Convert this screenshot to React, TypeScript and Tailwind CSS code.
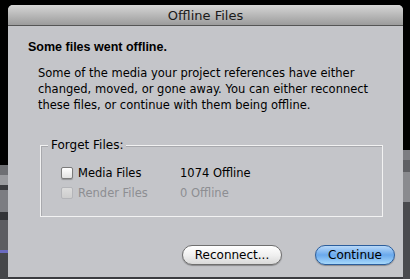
import React from "react";

const font = { fontFamily: '"DejaVu Sans", "Liberation Sans", sans-serif' };

function Checkbox({ disabled }: { disabled?: boolean }) {
  return (
    <span
      className={
        "inline-block w-[12px] h-[12px] rounded-[2px] border " +
        (disabled
          ? "border-[#b4b5b9] bg-gradient-to-b from-[#dcdcdc] to-[#cdcdcd]"
          : "border-[#7b7b7b] bg-gradient-to-b from-[#ffffff] to-[#e2e2e2] shadow-[0_1px_1px_rgba(0,0,0,0.25)]")
      }
    />
  );
}

export default function App() {
  return (
    <div className="w-[410px] h-[279px] bg-black flex overflow-hidden" style={font}>
      {/* background app peeking on the left */}
      <div className="w-[8px] flex flex-col">
        <div className="h-[165px] bg-black" />
        <div className="h-[10px] bg-[#6e6f73]" />
        <div className="h-[10px] bg-[#9a9b9f]" />
        <div className="h-[5px] bg-[#3a3b3f]" />
        <div className="h-[22px] bg-[#7c7d82]" />
        <div className="h-[8px] bg-[#333438]" />
        <div className="h-[30px] bg-[#5c5d62]" />
        <div className="h-[3px] bg-[#6a6ac0]" />
        <div className="flex-1 bg-[#45464a]" />
      </div>

      <div className="flex flex-col w-[395px]">
        <div className="h-[5px] bg-black" />
        {/* window */}
        <div className="h-[272px] flex flex-col bg-[#c4c5c9] rounded-t-[5px] overflow-hidden">
          <div className="h-[21px] shrink-0 flex items-center justify-center bg-gradient-to-b from-[#d6d6d6] to-[#9c9c9c] border-b border-[#555]">
            <span className="text-[13px] text-[#1a1a1a] leading-none">Offline Files</span>
          </div>

          <div className="flex flex-col pl-[20px] pr-[20px]">
            <div
              className="mt-[13px] text-[12.5px] font-bold text-black leading-[16px]"
              style={{ fontFamily: '"Liberation Sans", Arial, sans-serif' }}
            >
              Some files went offline.
            </div>
            <div className="mt-[10px] pl-[10px] text-[11.5px] text-black leading-[16px]">
              Some of the media your project references have either
              <br />
              changed, moved, or gone away. You can either reconnect
              <br />
              these files, or continue with them being offline.
            </div>

            {/* group box */}
            <div className="relative mt-[32px] ml-[12px] w-[343px] h-[72px] border border-[#f2f2f2] shadow-[inset_1px_1px_0_#a8a9ad]">
              <span className="absolute -top-[8px] left-[7px] px-[3px] bg-[#c4c5c9] text-[12px] leading-[15px] text-black">
                Forget Files:
              </span>
              <div className="pt-[19px] pl-[20px] grid grid-cols-[119px_1fr] gap-y-[4px] text-[11.5px] leading-[16px]">
                <div className="flex items-center gap-[5px] text-black">
                  <Checkbox />
                  <span>Media Files</span>
                </div>
                <div className="text-black">1074 Offline</div>
                <div className="flex items-center gap-[5px] text-[#8d8e92]">
                  <Checkbox disabled />
                  <span>Render Files</span>
                </div>
                <div className="text-[#8d8e92]">0 Offline</div>
              </div>
            </div>

            <div className="mt-[28px] flex justify-end gap-[33px] mr-[-12px]">
              <button className="w-[100px] h-[20px] rounded-full border border-[#6f6f6f] bg-gradient-to-b from-[#ffffff] via-[#f0f0f0] to-[#d9d9d9] text-[12px] text-black leading-none shadow-[0_1px_1px_rgba(0,0,0,0.3)]">
                Reconnect...
              </button>
              <button className="w-[80px] h-[20px] rounded-full border border-[#2c5e9c] bg-gradient-to-b from-[#b9d9f8] via-[#6aa9ec] to-[#a6d8fb] text-[12px] text-black leading-none shadow-[0_1px_1px_rgba(0,0,0,0.3)]">
                Continue
              </button>
            </div>
          </div>
        </div>
        <div className="flex-1 bg-[#3b3c40]" />
      </div>

      <div className="flex-1 flex flex-col">
        <div className="h-[150px] bg-black" />
        <div className="h-[10px] bg-[#7d7e82]" />
        <div className="h-[12px] bg-[#5f6064]" />
        <div className="h-[30px] bg-[#8a8b8f]" />
        <div className="flex-1 bg-[#4a4b4f]" />
      </div>
    </div>
  );
}
